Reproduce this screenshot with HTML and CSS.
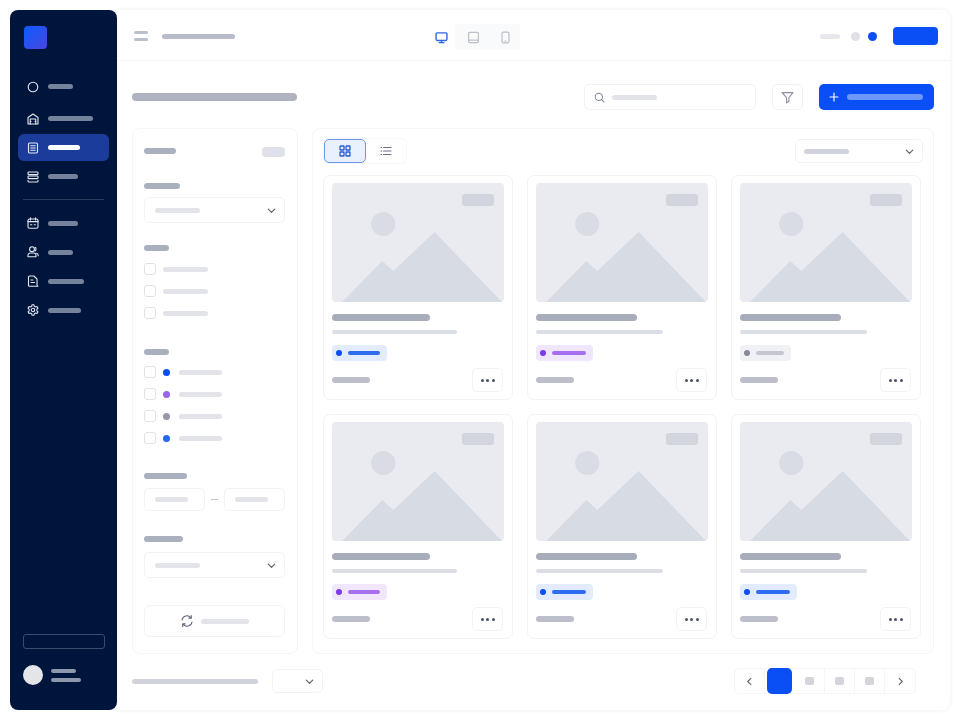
FILE: index.html
```html
<!DOCTYPE html>
<html lang="en">
<head>
    <meta charset="UTF-8">
    <title>Product catalog wireframe</title>
    <link rel="stylesheet" href="styles.css">
</head>
<body>
    <svg class="sprites" width="0" height="0" aria-hidden="true">
        <symbol id="i-chevron" viewBox="0 0 12 12"><path d="M2.5 4.5 6 8l3.5-3.5" fill="none" stroke="currentColor" stroke-width="1.4" stroke-linecap="round" stroke-linejoin="round"/></symbol>
        <symbol id="i-photo" viewBox="0 0 171 119" preserveAspectRatio="none">
            <circle cx="51" cy="41" r="12" fill="#d9dce4"/>
            <path d="M10 119 50 78 61 88 102 49 169 119Z" fill="#d7dbe4"/>
        </symbol>
    </svg>

    <div class="app">
        <!-- sidebar -->
        <aside class="sidebar">
            <div class="logo"></div>
            <nav class="nav">
                <a class="nav-item nav-first">
                    <svg class="nav-icon" viewBox="0 0 12 12"><circle cx="6" cy="6" r="4.8"/></svg>
                    <span class="bar nav-bar w25"></span>
                </a>
                <a class="nav-item">
                    <svg class="nav-icon" viewBox="0 0 12 12"><path d="M1 4.500 6 1l5 3.500V11H1Z"/><path d="M3.200 11V6h5.600v5M3.200 8.500h.8M8 8.500h.8"/></svg>
                    <span class="bar nav-bar w45"></span>
                </a>
                <a class="nav-item active">
                    <svg class="nav-icon" viewBox="0 0 12 12"><rect x="1.500" y="1" width="9" height="10" rx="1.200"/><path d="M3.700 3.700h4.600M3.700 6h4.600M3.700 8.300h4.600"/></svg>
                    <span class="bar nav-bar w32"></span>
                </a>
                <a class="nav-item">
                    <svg class="nav-icon" viewBox="0 0 12 12"><rect x="1" y="1" width="10" height="2.600" rx=".8"/><rect x="1" y="5" width="10" height="2.600" rx=".8"/><path d="M1 9.200v.8c0 .6.400 1 1 1h8c.6 0 1-.4 1-1v-.8"/></svg>
                    <span class="bar nav-bar w30"></span>
                </a>
                <div class="nav-divider"></div>
                <a class="nav-item">
                    <svg class="nav-icon" viewBox="0 0 12 12"><rect x="1" y="2" width="10" height="9.200" rx="1.500"/><path d="M1 4.600h10M3.500 .8v2.200M8.500 .8v2.200M3.600 7.800h1.200M7.200 7.800h1.200"/></svg>
                    <span class="bar nav-bar w30"></span>
                </a>
                <a class="nav-item">
                    <svg class="nav-icon" viewBox="0 0 12 12"><circle cx="5" cy="3.200" r="2.400"/><path d="M1 10.800V9.200c0-1.400 1-2.200 2.200-2.200h3.400C8 7 9 8 9 9.200v1.600ZM8 1.200c1.300.5 1.500 3 0 3.800M9.800 7.200c1 .5 1.400 1.300 1.400 2.600"/></svg>
                    <span class="bar nav-bar w25"></span>
                </a>
                <a class="nav-item">
                    <svg class="nav-icon" viewBox="0 0 12 12"><path d="M2.500 1h4.300L10 4v6l.8 1.200H2.500a1 1 0 0 1-1-1.200V2a1 1 0 0 1 1-1Z"/><path d="M4 5h2M4 7.500h3.500"/></svg>
                    <span class="bar nav-bar w36"></span>
                </a>
                <a class="nav-item">
                    <svg class="nav-icon" viewBox="0 0 12 12"><circle cx="6" cy="6" r="1.700"/><path d="M5 .8h2l.3 1.500 1.300.7 1.400-.5 1 1.700-1.100 1v1.600l1.100 1-1 1.700-1.400-.5-1.300.7L7 11.200H5l-.3-1.500-1.300-.7-1.400.5-1-1.700 1.100-1V5.200L1 4.200l1-1.700 1.400.5 1.300-.7Z"/></svg>
                    <span class="bar nav-bar w33"></span>
                </a>
            </nav>
            <div class="side-bottom">
                <div class="side-outline"></div>
                <div class="user">
                    <div class="avatar"></div>
                    <div class="user-lines">
                        <span class="bar user-bar w25"></span>
                        <span class="bar user-bar w30"></span>
                    </div>
                </div>
            </div>
        </aside>

        <main class="main">
            <!-- top bar -->
            <header class="topbar">
                <div class="burger"><i></i><i></i></div>
                <span class="bar top-title"></span>
                <div class="devices">
                    <button class="device on">
                        <svg viewBox="0 0 12 12"><rect x="1" y="1.700" width="10" height="7" rx="1"/><path d="M6 8.700v1.800M3.800 10.700h4.400"/></svg>
                    </button>
                    <button class="device">
                        <svg viewBox="0 0 12 12"><rect x="1.500" y="1.300" width="9" height="9.400" rx="1"/><path d="M1.500 8.500h9"/></svg>
                    </button>
                    <button class="device">
                        <svg viewBox="0 0 12 12"><rect x="2.800" y="1" width="6.400" height="10" rx="1.200"/><path d="M5.500 9.300h1"/></svg>
                    </button>
                </div>
                <div class="top-right">
                    <span class="bar top-mini"></span>
                    <span class="top-dot"></span>
                    <span class="top-dot blue"></span>
                    <button class="top-btn"></button>
                </div>
            </header>

            <div class="page">
                <!-- title row -->
                <div class="page-head">
                    <span class="bar page-title"></span>
                    <div class="search">
                        <svg viewBox="0 0 12 12"><circle cx="5.300" cy="5.300" r="4"/><path d="m8.300 8.300 2.700 2.700"/></svg>
                        <span class="bar light w45"></span>
                    </div>
                    <button class="filter-btn">
                        <svg viewBox="0 0 12 12"><path d="M1 1.500h10L7.300 6.200v3.300L5.200 11V6.200Z"/></svg>
                    </button>
                    <button class="add-btn">
                        <svg viewBox="0 0 12 12"><path d="M6 1.200v9.600M1.200 6h9.600"/></svg>
                        <span class="bar add-bar"></span>
                    </button>
                </div>

                <div class="columns">
                    <!-- filters -->
                    <section class="filters panel">
                        <div class="filter-head">
                            <span class="bar mid w32"></span>
                            <span class="clear-pill"></span>
                        </div>

                        <span class="bar mid label w36"></span>
                        <div class="select">
                            <span class="bar light w45"></span>
                            <svg class="chev"><use href="#i-chevron"/></svg>
                        </div>

                        <span class="bar mid label label-check w25"></span>
                        <div class="checks">
                            <label class="check"><i class="box"></i><span class="bar light w45"></span></label>
                            <label class="check"><i class="box"></i><span class="bar light w45"></span></label>
                            <label class="check"><i class="box"></i><span class="bar light w45"></span></label>
                        </div>

                        <span class="bar mid label label-status w25"></span>
                        <div class="checks">
                            <label class="check"><i class="box"></i><i class="dot blue"></i><span class="bar light w43"></span></label>
                            <label class="check"><i class="box"></i><i class="dot purple"></i><span class="bar light w43"></span></label>
                            <label class="check"><i class="box"></i><i class="dot gray"></i><span class="bar light w43"></span></label>
                            <label class="check"><i class="box"></i><i class="dot sky"></i><span class="bar light w43"></span></label>
                        </div>

                        <span class="bar mid label label-range w43"></span>
                        <div class="range">
                            <div class="range-input"><span class="bar light w33"></span></div>
                            <i class="range-dash"></i>
                            <div class="range-input"><span class="bar light w33"></span></div>
                        </div>

                        <span class="bar mid label label-last w39"></span>
                        <div class="select">
                            <span class="bar light w45"></span>
                            <svg class="chev"><use href="#i-chevron"/></svg>
                        </div>

                        <button class="reset">
                            <svg viewBox="0 0 14 14"><path d="M2 6a5 5 0 0 1 8.800-2.400M12 8a5 5 0 0 1-8.800 2.400"/><path d="M11.300 1.500v2.600H8.800M2.700 12.500V9.900h2.500"/></svg>
                            <span class="bar light w48"></span>
                        </button>
                    </section>

                    <!-- products -->
                    <section class="products panel">
                        <div class="products-head">
                            <div class="view-toggle">
                                <button class="view on">
                                    <svg viewBox="0 0 12 12"><rect x="1" y="1" width="4" height="4" rx=".6"/><rect x="7" y="1" width="4" height="4" rx=".6"/><rect x="1" y="7" width="4" height="4" rx=".6"/><rect x="7" y="7" width="4" height="4" rx=".6"/></svg>
                                </button>
                                <button class="view">
                                    <svg viewBox="0 0 12 12"><path d="M3.500 2.500H11M3.500 6H11M3.500 9.500H11M1 2.500h.6M1 6h.6M1 9.500h.6"/></svg>
                                </button>
                            </div>
                            <div class="select sort">
                                <span class="bar soft w45"></span>
                                <svg class="chev"><use href="#i-chevron"/></svg>
                            </div>
                        </div>

                        <div class="grid">
                            <article class="card">
                                <div class="thumb"><svg><use href="#i-photo"/></svg><span class="thumb-badge"></span></div>
                                <span class="bar card-title t98"></span>
                                <span class="bar card-sub s125"></span>
                                <span class="tag tag-blue"><i></i><b class="b32"></b></span>
                                <div class="card-foot"><span class="bar card-price"></span><button class="more"><i></i><i></i><i></i></button></div>
                            </article>
                            <article class="card">
                                <div class="thumb"><svg><use href="#i-photo"/></svg><span class="thumb-badge"></span></div>
                                <span class="bar card-title t101"></span>
                                <span class="bar card-sub s127"></span>
                                <span class="tag tag-purple"><i></i><b class="b34"></b></span>
                                <div class="card-foot"><span class="bar card-price"></span><button class="more"><i></i><i></i><i></i></button></div>
                            </article>
                            <article class="card">
                                <div class="thumb"><svg><use href="#i-photo"/></svg><span class="thumb-badge"></span></div>
                                <span class="bar card-title t101"></span>
                                <span class="bar card-sub s127"></span>
                                <span class="tag tag-gray"><i></i><b class="b28"></b></span>
                                <div class="card-foot"><span class="bar card-price"></span><button class="more"><i></i><i></i><i></i></button></div>
                            </article>
                            <article class="card">
                                <div class="thumb"><svg><use href="#i-photo"/></svg><span class="thumb-badge"></span></div>
                                <span class="bar card-title t98"></span>
                                <span class="bar card-sub s125"></span>
                                <span class="tag tag-purple"><i></i><b class="b32"></b></span>
                                <div class="card-foot"><span class="bar card-price"></span><button class="more"><i></i><i></i><i></i></button></div>
                            </article>
                            <article class="card">
                                <div class="thumb"><svg><use href="#i-photo"/></svg><span class="thumb-badge"></span></div>
                                <span class="bar card-title t101"></span>
                                <span class="bar card-sub s127"></span>
                                <span class="tag tag-blue"><i></i><b class="b34"></b></span>
                                <div class="card-foot"><span class="bar card-price"></span><button class="more"><i></i><i></i><i></i></button></div>
                            </article>
                            <article class="card">
                                <div class="thumb"><svg><use href="#i-photo"/></svg><span class="thumb-badge"></span></div>
                                <span class="bar card-title t101"></span>
                                <span class="bar card-sub s127"></span>
                                <span class="tag tag-blue"><i></i><b class="b34"></b></span>
                                <div class="card-foot"><span class="bar card-price"></span><button class="more"><i></i><i></i><i></i></button></div>
                            </article>
                        </div>
                    </section>
                </div>

                <!-- footer -->
                <div class="page-foot">
                    <span class="bar soft foot-bar"></span>
                    <div class="select per-page"><svg class="chev"><use href="#i-chevron"/></svg></div>
                    <div class="pager">
                        <button class="pg"><svg viewBox="0 0 12 12"><path d="M7.500 2.500 4 6l3.500 3.500"/></svg></button>
                        <button class="pg current"></button>
                        <button class="pg"><i></i></button>
                        <button class="pg"><i></i></button>
                        <button class="pg"><i></i></button>
                        <button class="pg pg-next"><svg viewBox="0 0 12 12"><path d="M4.500 2.500 8 6 4.500 9.500"/></svg></button>
                    </div>
                </div>
            </div>
        </main>
    </div>
</body>
</html>
```

FILE: styles.css
```css
/* base */
* {
    box-sizing: border-box;
}

html, body {
    height: 100%;
}

body {
    margin: 0;
    padding: 10px;
    background-color: #fff;
    font-family: "Inter", "Liberation Sans", sans-serif;
    overflow: hidden;
}

button {
    padding: 0;
    border: none;
    background: none;
    font: inherit;
}

.sprites {
    position: absolute;
}

.app {
    display: flex;
    height: 700px;
}

/* placeholder text bars */
.bar {
    display: block;
    height: 5px;
    border-radius: 3px;
    flex: none;
}

.bar.light { background-color: #e2e4ea; height: 5px; }
.bar.soft { background-color: #d0d3dc; height: 5px; }
.bar.mid { background-color: #abb0bf; height: 6px; }

.w25 { width: 25px; }
.w30 { width: 30px; }
.w32 { width: 32px; }
.w33 { width: 33px; }
.w36 { width: 36px; }
.w39 { width: 39px; }
.w43 { width: 43px; }
.w45 { width: 45px; }
.w48 { width: 48px; }

/* sidebar */
.sidebar {
    display: flex;
    flex-direction: column;
    flex: none;
    width: 107px;
    padding: 16px 8px 0;
    background-color: #00153c;
    border-radius: 8px;
}

.logo {
    width: 23px;
    height: 23px;
    margin-left: 6px;
    border-radius: 4px;
    background: linear-gradient(135deg, #0a5cff, #4a46e0);
}

.nav {
    display: flex;
    flex-direction: column;
    gap: 2px;
    margin-top: 24px;
}

.nav-item {
    display: flex;
    align-items: center;
    gap: 9px;
    height: 27px;
    padding-left: 9px;
    border-radius: 6px;
}

.nav-first {
    margin-bottom: 3px;
}

.nav-icon {
    flex: none;
    width: 12px;
    height: 12px;
    fill: none;
    stroke: #e4e8f0;
    stroke-width: 1.1;
    stroke-linejoin: round;
    stroke-linecap: round;
}

.nav-bar {
    background-color: #74829c;
}

.nav-item.active {
    background-color: #1c3c9c;
}

.nav-item.active .nav-bar {
    background-color: #fff;
}

.nav-divider {
    height: 1px;
    margin: 7px 5px 7.5px;
    background-color: #2b3b5e;
}

.side-bottom {
    margin-top: auto;
    padding: 0 4px 0 5px;
}

.side-outline {
    height: 15px;
    border: 1px solid #3c4b6c;
    border-radius: 3px;
}

.user {
    display: flex;
    align-items: center;
    gap: 8px;
    margin-top: 16px;
    margin-bottom: 25px;
}

.avatar {
    width: 20px;
    height: 20px;
    border-radius: 50%;
    background-color: #e3e5e9;
}

.user-lines {
    display: flex;
    flex-direction: column;
    gap: 5px;
}

.user-bar {
    height: 4px;
    background-color: #8e98ad;
}

/* main */
.main {
    display: flex;
    flex-direction: column;
    flex: 1;
    min-width: 0;
    background-color: #fff;
    border-radius: 0 8px 8px 0;
    box-shadow: 0 0 5px rgba(30, 40, 80, 0.08);
}

.topbar {
    display: flex;
    align-items: center;
    flex: none;
    height: 51px;
    padding: 2px 12px 0 17px;
    border-bottom: 1px solid #f3f4f6;
}

.burger {
    display: flex;
    flex-direction: column;
    gap: 4px;
    width: 14px;
}

.burger i {
    display: block;
    height: 3px;
    border-radius: 2px;
    background-color: #bcc0cc;
}

.top-title {
    width: 73px;
    margin-left: 14px;
    background-color: #b8bcca;
}

.devices {
    display: flex;
    margin-left: 192px;
    margin-top: 2px;
    height: 26px;
}

.device {
    width: 36px;
    height: 26px;
    background-color: #f9fafc;
    display: flex;
    align-items: center;
    justify-content: center;
}

.device:last-child {
    width: 29px;
}

.device svg {
    width: 13px;
    height: 13px;
    fill: none;
    stroke: #bcbfc8;
    stroke-width: 1.1;
    stroke-linejoin: round;
    stroke-linecap: round;
}

.device.on {
    width: 28px;
    background-color: #fff;
}

.device.on svg {
    stroke: #2f68df;
    stroke-width: 1.3;
}

.top-right {
    display: flex;
    align-items: center;
    margin-left: auto;
}

.top-mini {
    width: 20px;
    background-color: #e6e8ec;
}

.top-dot {
    width: 9px;
    height: 9px;
    margin-left: 11px;
    border-radius: 50%;
    background-color: #dfe1e7;
}

.top-dot.blue {
    margin-left: 8px;
    background-color: #0a4ff5;
}

.top-btn {
    width: 45px;
    height: 18px;
    margin-left: 16px;
    border-radius: 4px;
    background-color: #0a4ff5;
}

.page {
    display: flex;
    flex-direction: column;
    flex: 1;
    min-height: 0;
    padding: 23px 16px 0 15px;
}

.page-head {
    display: flex;
    align-items: center;
    height: 26px;
}

.page-title {
    width: 165px;
    height: 8px;
    border-radius: 4px;
    background-color: #aeb2c1;
}

.search {
    display: flex;
    align-items: center;
    gap: 7px;
    width: 172px;
    height: 26px;
    margin-left: auto;
    padding-left: 9px;
    border: 1px solid #f1f2f5;
    border-radius: 5px;
}

.search svg {
    width: 11px;
    height: 11px;
    fill: none;
    stroke: #7e8494;
    stroke-width: 1.1;
    stroke-linecap: round;
}

.filter-btn {
    display: flex;
    align-items: center;
    justify-content: center;
    width: 31px;
    height: 26px;
    margin-left: 16px;
    border: 1px solid #f1f2f5;
    border-radius: 5px;
    background-color: #fff;
}

.filter-btn svg {
    width: 13px;
    height: 13px;
    fill: none;
    stroke: #8a8f9e;
    stroke-width: 1;
    stroke-linejoin: round;
}

.add-btn {
    display: flex;
    align-items: center;
    gap: 8px;
    width: 115px;
    height: 26px;
    margin-left: 16px;
    padding-left: 10px;
    border-radius: 5px;
    background-color: #0a4ff5;
}

.add-btn svg {
    width: 10px;
    height: 10px;
    fill: none;
    stroke: #fff;
    stroke-width: 1.4;
    stroke-linecap: round;
}

.add-bar {
    width: 76px;
    height: 6px;
    background-color: #6d97f9;
}

.columns {
    display: flex;
    gap: 14px;
    flex: none;
    height: 526px;
    margin-top: 18px;
}

.panel {
    border: 1px solid #f4f5f7;
    border-radius: 8px;
    background-color: #fff;
}

/* filters */
.filters {
    display: flex;
    flex-direction: column;
    flex: none;
    width: 166px;
    padding: 18px 12px 0 11px;
}

.filter-head {
    display: flex;
    align-items: flex-start;
    justify-content: space-between;
    height: 10px;
}

.filter-head .bar {
    margin-top: 1px;
}

.clear-pill {
    width: 23px;
    height: 10px;
    border-radius: 4px;
    background-color: #dfe1e8;
}

.label {
    margin-top: 26px;
    margin-bottom: 8px;
}

.label-check {
    margin-top: 22px;
    margin-bottom: 12px;
}

.label-status {
    margin-top: 30px;
    margin-bottom: 11px;
}

.label-range {
    margin-top: 29px;
    margin-bottom: 9px;
}

.label-last {
    margin-top: 25px;
    margin-bottom: 10px;
}

.select {
    display: flex;
    align-items: center;
    justify-content: space-between;
    height: 26px;
    padding: 0 7px 0 10px;
    border: 1px solid #f2f3f6;
    border-radius: 5px;
    background-color: #fff;
}

.chev {
    flex: none;
    width: 11px;
    height: 11px;
    color: #5e6474;
}

.checks {
    display: flex;
    flex-direction: column;
    gap: 10px;
}

.check {
    display: flex;
    align-items: center;
    height: 12px;
}

.box {
    flex: none;
    width: 12px;
    height: 12px;
    margin-right: 7px;
    border: 1px solid #dfe1e6;
    border-radius: 3px;
}

.dot {
    flex: none;
    width: 7px;
    height: 7px;
    margin-right: 9px;
    border-radius: 50%;
}

.dot.blue { background-color: #0a4ff5; }
.dot.purple { background-color: #9a63ea; }
.dot.gray { background-color: #9896ac; }
.dot.sky { background-color: #2468ee; }

.range {
    display: flex;
    align-items: center;
    justify-content: space-between;
}

.range-input {
    display: flex;
    align-items: center;
    width: 61px;
    height: 23px;
    padding-left: 10px;
    border: 1px solid #f2f3f6;
    border-radius: 5px;
}

.range-dash {
    width: 7px;
    height: 1px;
    background-color: #c4c7d0;
}

.reset {
    display: flex;
    align-items: center;
    justify-content: center;
    gap: 7px;
    height: 32px;
    margin-top: 27px;
    border: 1px solid #f2f3f6;
    border-radius: 6px;
    background-color: #fff;
}

.reset svg {
    width: 14px;
    height: 14px;
    fill: none;
    stroke: #5d6375;
    stroke-width: 1.1;
    stroke-linecap: round;
    stroke-linejoin: round;
}

/* products */
.products {
    flex: 1;
    min-width: 0;
    padding: 10px 10px 0 10px;
}

.products-head {
    display: flex;
    align-items: center;
    justify-content: space-between;
    padding: 0 0 0 1px;
}

.view-toggle {
    display: flex;
    width: 82px;
    height: 24px;
    border-radius: 5px;
    box-shadow: 0 0 0 1px #f6f7f9;
}

.view {
    display: flex;
    align-items: center;
    justify-content: center;
    width: 41px;
    height: 24px;
    border-radius: 5px;
}

.view.on {
    width: 42px;
    border: 1px solid #6f96ee;
    background-color: #e9f0fe;
}

.view svg {
    width: 12px;
    height: 12px;
    fill: none;
    stroke: #6b7182;
    stroke-width: 1;
    stroke-linecap: round;
}

.view.on svg {
    stroke: #2459d9;
    stroke-width: 1.3;
}

.sort {
    width: 128px;
    height: 24px;
    padding: 0 7px 0 8px;
}

.grid {
    display: grid;
    grid-template-columns: repeat(3, 190px);
    grid-auto-rows: 225px;
    gap: 14px;
    margin-top: 12px;
}

.card {
    display: flex;
    flex-direction: column;
    align-items: flex-start;
    padding: 7px 8px 0;
    border: 1px solid #f2f3f6;
    border-radius: 7px;
    background-color: #fff;
}

.thumb {
    position: relative;
    flex: none;
    align-self: stretch;
    height: 119px;
    border-radius: 4px;
    background-color: #e9ebf1;
    overflow: hidden;
}

.thumb svg {
    display: block;
    width: 100%;
    height: 100%;
}

.thumb-badge {
    position: absolute;
    top: 11px;
    right: 10px;
    width: 32px;
    height: 12px;
    border-radius: 3px;
    background-color: #d2d5de;
}

.card-title {
    height: 7px;
    margin-top: 12px;
    border-radius: 4px;
    background-color: #a8adbc;
}

.t98 { width: 98px; }
.t101 { width: 101px; }

.card-sub {
    height: 4px;
    margin-top: 9px;
    background-color: #dcdee5;
}

.s125 { width: 125px; }
.s127 { width: 127px; }

.tag {
    display: flex;
    align-items: center;
    height: 16px;
    margin-top: 11px;
    padding: 0 7px 0 4px;
    border-radius: 4px;
}

.tag i {
    width: 6px;
    height: 6px;
    border-radius: 50%;
}

.tag b {
    display: block;
    height: 4px;
    margin-left: 6px;
    border-radius: 2px;
}

.b28 { width: 28px; }
.b32 { width: 32px; }
.b34 { width: 34px; }

.tag-blue { background-color: #e3ecff; }
.tag-blue i { background-color: #0a4ff5; }
.tag-blue b { background-color: #2f6df0; }
.tag-purple { background-color: #f0e6fe; }
.tag-purple i { background-color: #7c3aed; }
.tag-purple b { background-color: #a66ff0; }
.tag-gray { background-color: #f0f1f4; }
.tag-gray i { background-color: #878899; }
.tag-gray b { background-color: #c4c6d0; }

.card-foot {
    display: flex;
    align-items: center;
    justify-content: space-between;
    align-self: stretch;
    margin-top: 7px;
}

.card-price {
    width: 38px;
    height: 6px;
    background-color: #bcbeca;
}

.more {
    display: flex;
    align-items: center;
    justify-content: center;
    gap: 2.500px;
    width: 31px;
    height: 24px;
    margin-right: 1px;
    border: 1px solid #f2f3f6;
    border-radius: 5px;
    background-color: #fff;
}

.more i {
    width: 3px;
    height: 3px;
    border-radius: 50%;
    background-color: #4a5066;
}

/* footer */
.page-foot {
    display: flex;
    align-items: center;
    height: 26px;
    margin-top: 14px;
}

.foot-bar {
    width: 126px;
}

.per-page {
    justify-content: flex-end;
    width: 51px;
    height: 24px;
    margin-left: 14px;
    padding: 0 7px;
}

.pager {
    display: flex;
    align-items: center;
    margin-left: auto;
    margin-right: 18px;
    border: 1px solid #f4f5f7;
    border-radius: 5px;
}

.pg {
    display: flex;
    align-items: center;
    justify-content: center;
    width: 30px;
    height: 24px;
    border-right: 1px solid #f4f5f7;
}

.pg-next {
    border-right: none;
}

.pg svg {
    width: 11px;
    height: 11px;
    fill: none;
    stroke: #5f6577;
    stroke-width: 1.2;
    stroke-linecap: round;
    stroke-linejoin: round;
}

.pg i {
    width: 9px;
    height: 8px;
    border-radius: 2px;
    background-color: #d3d5db;
}

.pg.current {
    width: 25px;
    height: 26px;
    margin: -1px 3px -1px 2px;
    border: none;
    border-radius: 5px;
    background-color: #0a4ff5;
}
```
